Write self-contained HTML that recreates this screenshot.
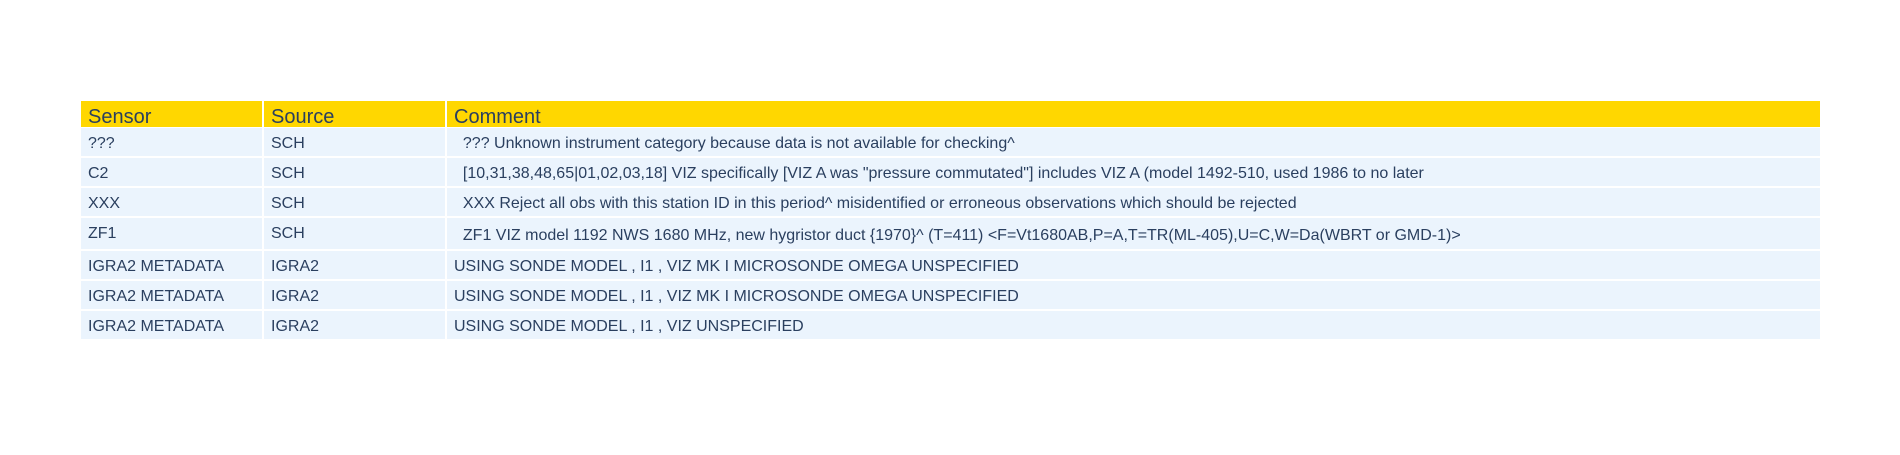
<!DOCTYPE html>
<html><head><meta charset="utf-8"><style>
body{margin:0;width:1900px;height:455px;background:#fff;position:relative;overflow:hidden;font-family:"Liberation Sans",sans-serif;color:#2a3f5f}
.c{position:absolute;box-sizing:border-box;border-right:2px solid #fff;border-bottom:2px solid #fff;background:#ebf4fd}
.h{background:#ffd700;border-bottom:1px solid #fff}
.t{position:absolute;white-space:pre;font-size:16px;line-height:20px}
.ht{position:absolute;white-space:pre;font-size:20px;line-height:24px}
</style></head><body>
<div class="c h" style="left:81px;top:101px;width:183px;height:27px"></div>
<div class="c h" style="left:264px;top:101px;width:183px;height:27px"></div>
<div class="c h" style="left:447px;top:101px;width:1373px;height:27px;border-right:0"></div>
<div class="ht" style="left:88px;top:105px">Sensor</div>
<div class="ht" style="left:271px;top:105px">Source</div>
<div class="ht" style="left:454px;top:105px">Comment</div>
<div id="rows"></div>
<script>
var rows=[[128,30,"???","SCH","  ??? Unknown instrument category because data is not available for checking^",0],
[158,30,"C2","SCH","  [10,31,38,48,65|01,02,03,18] VIZ specifically [VIZ A was \"pressure commutated\"] includes VIZ A (model 1492-510, used 1986 to no later",0],
[188,30,"XXX","SCH","  XXX Reject all obs with this station ID in this period^ misidentified or erroneous observations which should be rejected",0],
[218,33,"ZF1","SCH","  ZF1 VIZ model 1192 NWS 1680 MHz, new hygristor duct {1970}^ (T=411) <F=Vt1680AB,P=A,T=TR(ML-405),U=C,W=Da(WBRT or GMD-1)>",2],
[251,30,"IGRA2 METADATA","IGRA2","USING SONDE MODEL , I1 , VIZ MK I MICROSONDE OMEGA UNSPECIFIED",0],
[281,30,"IGRA2 METADATA","IGRA2","USING SONDE MODEL , I1 , VIZ MK I MICROSONDE OMEGA UNSPECIFIED",0],
[311,30,"IGRA2 METADATA","IGRA2","USING SONDE MODEL , I1 , VIZ UNSPECIFIED",0]];
var h="";
rows.forEach(function(r){
 var y=r[0],hh=r[1];
 h+='<div class="c" style="left:81px;top:'+y+'px;width:183px;height:'+hh+'px"></div>';
 h+='<div class="c" style="left:264px;top:'+y+'px;width:183px;height:'+hh+'px"></div>';
 h+='<div class="c" style="left:447px;top:'+y+'px;width:1373px;height:'+hh+'px;border-right:0"></div>';
 var e=function(s){return s.replace(/&/g,"&amp;").replace(/</g,"&lt;").replace(/>/g,"&gt;");};
 h+='<div class="t" style="left:88px;top:'+(y+6)+'px">'+e(r[2])+'</div>';
 h+='<div class="t" style="left:271px;top:'+(y+6)+'px">'+e(r[3])+'</div>';
 h+='<div class="t" style="left:454px;top:'+(y+6+r[5])+'px">'+e(r[4])+'</div>';
});
document.getElementById("rows").innerHTML=h;
</script>
</body></html>
